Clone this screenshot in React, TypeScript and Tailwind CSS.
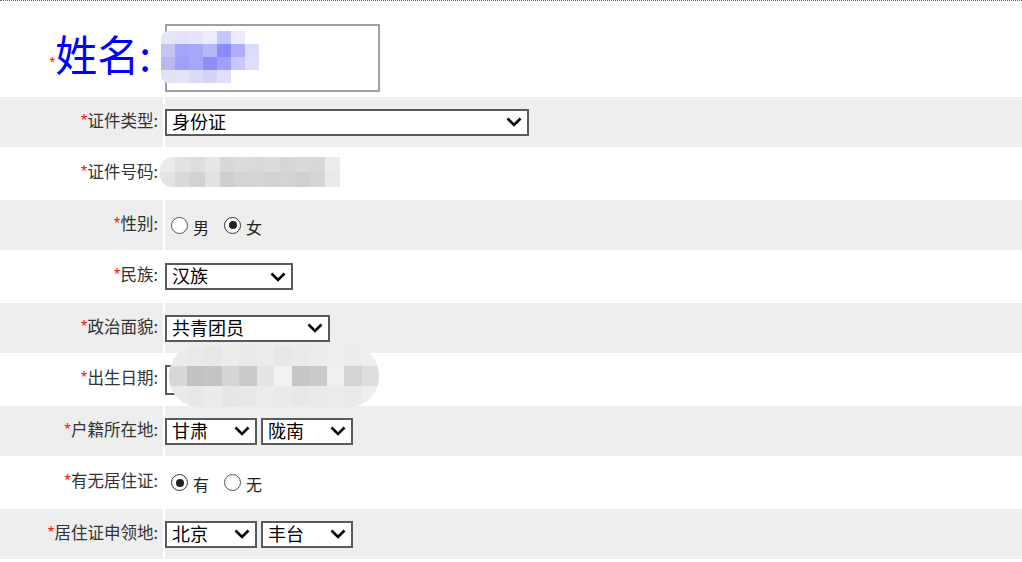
import type {ReactNode} from 'react';

const CJK = 'font-["Noto_Sans_CJK_SC","Noto_Sans",sans-serif]';

// pixelated privacy smudges, laid out on a small canvas of blocks
const NAME_BLUR: string[][] = [
  ['bg-[#e6e6f6]', 'bg-[#e2e2fa]', 'bg-[#e4e4fb]', 'bg-[#ececfc]', 'bg-[#c6c6fa]', 'bg-[#ececfc]', 'bg-transparent'],
  ['bg-[#c4c4f2]', 'bg-[#a4a4fa]', 'bg-[#a8a8fb]', 'bg-[#b6b6fb]', 'bg-[#8c8cf8]', 'bg-[#b0b0fa]', 'bg-[#dcdcfc]'],
  ['bg-[#b8b8ee]', 'bg-[#a0a0fa]', 'bg-[#a6a6fa]', 'bg-[#8e8ef8]', 'bg-[#a0a0fa]', 'bg-[#c8c8fa]', 'bg-[#dedefc]'],
  ['bg-[#e2e2f0]', 'bg-[#e4e4f8]', 'bg-[#dadafa]', 'bg-[#d4d4f8]', 'bg-[#e0e0fb]', 'bg-transparent', 'bg-transparent'],
];

const ID_BLUR: string[][] = [
  ['bg-[#ececec]', 'bg-[#e2e2e2]', 'bg-[#dedede]', 'bg-[#e6e6e6]', 'bg-[#d8d8d8]', 'bg-[#dcdcdc]', 'bg-[#dadada]', 'bg-[#dcdcdc]', 'bg-[#d6d6d6]', 'bg-[#dadada]', 'bg-[#d8d8d8]', 'bg-[#ececec]'],
  ['bg-[#e4e4e4]', 'bg-[#dadada]', 'bg-[#d2d2d2]', 'bg-[#e2e2e2]', 'bg-[#cfcfcf]', 'bg-[#d4d4d4]', 'bg-[#d6d6d6]', 'bg-[#d2d2d2]', 'bg-[#d4d4d4]', 'bg-[#d0d0d0]', 'bg-[#d6d6d6]', 'bg-[#eaeaea]'],
];

const DATE_BLUR: string[][] = [
  ['bg-[#ececec]', 'bg-[#eaeaea]', 'bg-[#e8e8e8]', 'bg-[#ececec]', 'bg-[#eaeaea]', 'bg-[#ececec]', 'bg-[#e8e8e8]', 'bg-[#eaeaea]', 'bg-[#ececec]', 'bg-[#eeeeee]', 'bg-[#ececec]', 'bg-[#eeeeee]'],
  ['bg-[#d8d8d8]', 'bg-[#c2c2c2]', 'bg-[#c4c4c4]', 'bg-[#d6d6d6]', 'bg-[#cacaca]', 'bg-[#e4e4e4]', 'bg-[#f2f2f2]', 'bg-[#c6c6c6]', 'bg-[#cbcbcb]', 'bg-[#f0f0f0]', 'bg-[#d4d4d4]', 'bg-[#dedede]'],
  ['bg-[#eaeaea]', 'bg-[#e8e8e8]', 'bg-[#ebebeb]', 'bg-[#e6e6e6]', 'bg-[#e8e8e8]', 'bg-[#ececec]', 'bg-[#eaeaea]', 'bg-[#e8e8e8]', 'bg-[#eaeaea]', 'bg-[#ececec]', 'bg-[#eaeaea]', 'bg-[#eeeeee]'],
];

function Mosaic({rows, cell, className}: {rows: string[][]; cell: string; className: string}) {
  return (
    <div className={['pointer-events-none absolute flex flex-col overflow-hidden', className].join(' ')}>
      {rows.map((row, i) => (
        <div key={i} className="flex flex-1">
          {row.map((c, j) => (
            <span key={j} className={[cell, 'h-full', c].join(' ')} />
          ))}
        </div>
      ))}
    </div>
  );
}

function Chevron() {
  return (
    <svg viewBox="0 0 16 10" className="pointer-events-none absolute right-[5px] top-1/2 h-[10px] w-[16px] -translate-y-1/2">
      <path d="M1.5 1.5 8 8l6.5-6.5" fill="none" stroke="#000" strokeWidth="2.6" />
    </svg>
  );
}

function Select({value, width}: {value: string; width: string}) {
  return (
    <div className={['relative h-[27px] border-2 border-[#5a5a5a] bg-white', width].join(' ')}>
      <div className={[CJK, 'pl-[5px] text-[18px] leading-[20px] text-black'].join(' ')}>{value}</div>
      <Chevron />
    </div>
  );
}

function Radio({checked, label}: {checked?: boolean; label: string}) {
  return (
    <span className="inline-flex items-center gap-[5px]">
      <span
        className={[
          'flex size-[17px] items-center justify-center rounded-full border-[1.5px] bg-white',
          checked ? 'border-[#333]' : 'border-[#555]',
        ].join(' ')}
      >
        {checked && <span className="size-[8px] rounded-full bg-[#222]" />}
      </span>
      <span className={[CJK, 'mt-[3px] text-[16px] leading-none text-[#222]'].join(' ')}>{label}</span>
    </span>
  );
}

function Row({label, gray, tall, children}: {label: string; gray: boolean; tall?: boolean; children: ReactNode}) {
  const bg = gray ? 'bg-[#eeeeee]' : 'bg-white';
  return (
    <div className={['flex gap-[2px]', tall ? 'h-[50px]' : 'h-[49px]'].join(' ')}>
      <div className={['flex w-[163px] items-center justify-end pb-[4px] pr-[5px]', bg].join(' ')}>
        <span className="mb-[1px] text-[12px] leading-none text-[#ff0000]">*</span>
        <span className={[CJK, 'text-[16.5px] leading-none text-[#333]'].join(' ')}>{label}:</span>
      </div>
      <div className={['flex flex-1 items-center', bg].join(' ')}>{children}</div>
    </div>
  );
}

export default function App() {
  return (
    <div className="h-[562px] w-[1022px] overflow-hidden bg-white">
      <div className="relative flex flex-col gap-[2px] border-t border-dotted border-[#666]">
        <div className="flex h-[94px] gap-[2px]">
          <div className="flex w-[163px] items-center justify-end pr-[12px] pt-[10px]">
            <span className="mt-[14px] text-[11px] leading-none text-[#ff0000]">*</span>
            <span className={[CJK, 'text-[42px] leading-none text-[#0000ff]'].join(' ')}>姓名:</span>
          </div>
          <div className="flex flex-1 items-start pt-[23px]">
            <div className="h-[68px] w-[215px] border-2 border-[#a0a0a0] bg-white" />
          </div>
        </div>

        <Row label="证件类型" gray tall>
          <Select value="身份证" width="w-[364px]" />
        </Row>
        <Row label="证件号码" gray={false}>
          <div className="h-[27px]" />
        </Row>
        <Row label="性别" gray tall>
          <div className="flex items-center gap-[15px] pl-[6px]">
            <Radio label="男" />
            <Radio label="女" checked />
          </div>
        </Row>
        <Row label="民族" gray={false}>
          <Select value="汉族" width="w-[128px]" />
        </Row>
        <Row label="政治面貌" gray tall>
          <Select value="共青团员" width="w-[165px]" />
        </Row>
        <Row label="出生日期" gray={false}>
          <div className="h-[30px] w-[180px] border-2 border-[#5a5a5a] bg-white" />
        </Row>
        <Row label="户籍所在地" gray tall>
          <div className="flex gap-[4px]">
            <Select value="甘肃" width="w-[92px]" />
            <Select value="陇南" width="w-[92px]" />
          </div>
        </Row>
        <Row label="有无居住证" gray={false}>
          <div className="flex items-center gap-[15px] pl-[6px]">
            <Radio label="有" checked />
            <Radio label="无" />
          </div>
        </Row>
        <Row label="居住证申领地" gray tall>
          <div className="flex gap-[4px]">
            <Select value="北京" width="w-[92px]" />
            <Select value="丰台" width="w-[92px]" />
          </div>
        </Row>

        <Mosaic rows={NAME_BLUR} cell="w-[14px]" className="left-[161px] top-[30px] h-[52px] rounded-l-[8px] rounded-r-[14px]" />
        <Mosaic rows={ID_BLUR} cell="w-[15px]" className="left-[160px] top-[156px] h-[30px] rounded-l-[12px]" />
        <Mosaic rows={DATE_BLUR} cell="w-[17.5px]" className="left-[169px] top-[344px] h-[62px] w-[210px] rounded-[30px]" />
      </div>
    </div>
  );
}
